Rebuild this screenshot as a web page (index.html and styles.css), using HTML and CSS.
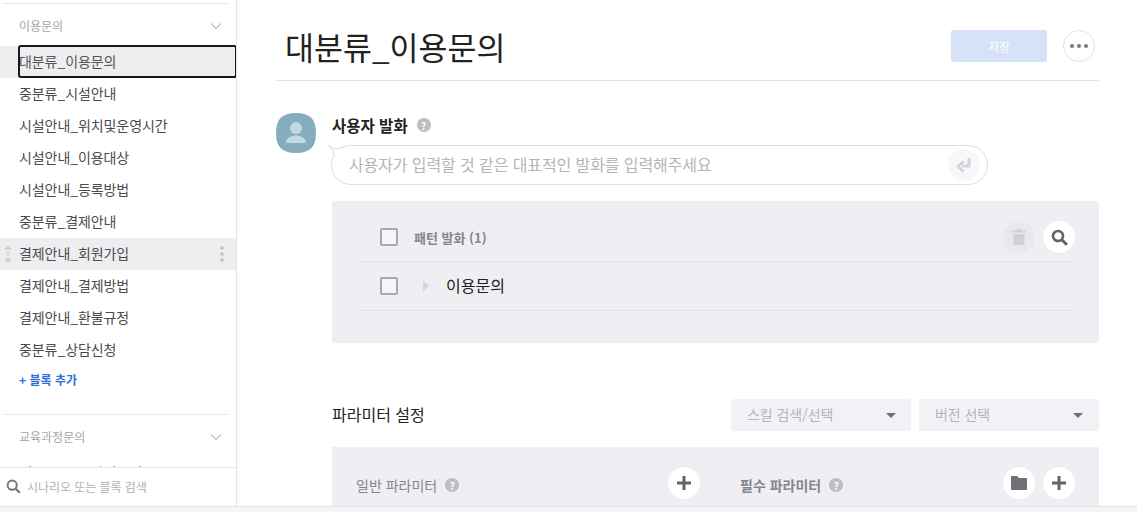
FILE: index.html
```html
<!DOCTYPE html>
<html lang="ko">
<head>
    <meta charset="UTF-8">
    <title>대분류_이용문의</title>
    <link rel="stylesheet" href="styles.css">
</head>
<body>
    <div class="app">
        <aside class="sidebar">
            <div class="block-list">
                <div class="group-header">
                    <span>이용문의</span>
                    <svg class="chevron" width="12" height="8" viewBox="0 0 12 8"><path d="M1 1.5l5 5 5-5" fill="none" stroke="#c4c4c8" stroke-width="1.4"/></svg>
                </div>
                <div class="block-item selected"><span class="focus-ring">대분류_이용문의</span></div>
                <div class="block-item">중분류_시설안내</div>
                <div class="block-item">시설안내_위치및운영시간</div>
                <div class="block-item">시설안내_이용대상</div>
                <div class="block-item">시설안내_등록방법</div>
                <div class="block-item">중분류_결제안내</div>
                <div class="block-item hovered">
                    <svg class="drag-handle" width="10" height="18" viewBox="0 0 10 18">
                        <path d="M5 .5l4 4H1z" fill="#cdcdd1"/>
                        <circle cx="5" cy="7.500" r="1" fill="#cdcdd1"/>
                        <circle cx="5" cy="10.500" r="1" fill="#cdcdd1"/>
                        <path d="M5 17.500l4-4H1z" fill="#cdcdd1"/>
                    </svg>
                    <span>결제안내_회원가입</span>
                    <svg class="item-more" width="4" height="16" viewBox="0 0 4 16">
                        <circle cx="2" cy="2" r="1.7" fill="#bdbdc2"/>
                        <circle cx="2" cy="8" r="1.7" fill="#bdbdc2"/>
                        <circle cx="2" cy="14" r="1.7" fill="#bdbdc2"/>
                    </svg>
                </div>
                <div class="block-item">결제안내_결제방법</div>
                <div class="block-item">결제안내_환불규정</div>
                <div class="block-item">중분류_상담신청</div>
                <div class="add-block">+ 블록 추가</div>
                <div class="group-header second">
                    <span>교육과정문의</span>
                    <svg class="chevron" width="12" height="8" viewBox="0 0 12 8"><path d="M1 1.5l5 5 5-5" fill="none" stroke="#c4c4c8" stroke-width="1.4"/></svg>
                </div>
                <div class="block-item">대분류_교육과정문의</div>
            </div>
            <div class="sidebar-search">
                <svg width="15" height="15" viewBox="0 0 15 15"><circle cx="6.2" cy="6.2" r="4.6" fill="none" stroke="#77777f" stroke-width="2"/><path d="M9.6 9.6l4.2 4.2" stroke="#77777f" stroke-width="2.2"/></svg>
                <span>시나리오 또는 블록 검색</span>
            </div>
        </aside>

        <main class="content">
            <header class="page-header">
                <h1>대분류_이용문의</h1>
                <button class="save-button">저장</button>
                <button class="more-button">
                    <svg width="18" height="4" viewBox="0 0 18 4"><circle cx="2" cy="2" r="2" fill="#77777f"/><circle cx="9" cy="2" r="2" fill="#77777f"/><circle cx="16" cy="2" r="2" fill="#77777f"/></svg>
                </button>
            </header>

            <section class="utterance">
                <div class="avatar">
                    <svg width="40" height="40" viewBox="0 0 40 40">
                        <path d="M20 0C34 0 40 6 40 20S34 40 20 40 0 34 0 20 6 0 20 0z" fill="#86adbd"/>
                        <circle cx="20" cy="15" r="6" fill="#c3d8df"/>
                        <path d="M10 30c0-5 5-7.500 10-7.500S30 25 30 30z" fill="#c3d8df"/>
                    </svg>
                </div>
                <div class="utterance-body">
                    <div class="field-label">사용자 발화 <span class="help">?</span></div>
                    <div class="utterance-input">
                        <svg class="bubble-tail" width="16" height="12" viewBox="0 0 16 12"><path d="M1 1L9 1 14 5 7 10z" fill="#fff"/><path d="M.5 .5C2.500 1.500 3.500 3 4.500 4.500 5 7 5.500 9 6 11M.5 .5C3 3.500 7 5.500 15 1.500" fill="none" stroke="#dedee2"/></svg>
                        <span>사용자가 입력할 것 같은 대표적인 발화를 입력해주세요</span>
                        <span class="enter-button">
                            <svg width="18" height="17" viewBox="0 0 18 17"><path d="M14 1v8H7M8.500 4.500L3 9.500l5.500 5" fill="none" stroke="#d4d4d9" stroke-width="3"/></svg>
                        </span>
                    </div>
                </div>
            </section>

            <section class="pattern-panel">
                <div class="pattern-row head">
                    <span class="checkbox"></span>
                    <span class="pattern-title">패턴 발화 (1)</span>
                    <span class="round-button faded">
                        <svg width="14" height="16" viewBox="0 0 14 16"><path d="M5 0h4v1.500h5V3.500H0V1.500h5zM1.500 5h11v11h-11z" fill="#d0d0d6"/></svg>
                    </span>
                    <span class="round-button">
                        <svg width="17" height="17" viewBox="0 0 17 17"><circle cx="7" cy="7" r="5" fill="none" stroke="#63636d" stroke-width="2.600"/><path d="M10.800 10.800l5 5" stroke="#63636d" stroke-width="3"/></svg>
                    </span>
                </div>
                <div class="pattern-row">
                    <span class="checkbox"></span>
                    <svg class="row-arrow" width="6" height="10" viewBox="0 0 6 10"><path d="M0 0l6 5-6 5z" fill="#d4d4d9"/></svg>
                    <span class="pattern-text">이용문의</span>
                </div>
            </section>

            <section class="param-header">
                <h2>파라미터 설정</h2>
                <div class="select-box"><span>스킬 검색/선택</span><i class="caret"></i></div>
                <div class="select-box version"><span>버전 선택</span><i class="caret"></i></div>
            </section>

            <section class="param-panel">
                <div class="param-col">
                    <span class="param-title">일반 파라미터</span>
                    <span class="help">?</span>
                    <span class="round-button push">
                        <svg width="16" height="16" viewBox="0 0 16 16"><path d="M8 1v14M1 8h14" stroke="#63636d" stroke-width="3"/></svg>
                    </span>
                </div>
                <div class="param-col required">
                    <span class="param-title">필수 파라미터</span>
                    <span class="help">?</span>
                    <span class="round-button push">
                        <svg width="16" height="14" viewBox="0 0 16 14"><path d="M0 1a1 1 0 0 1 1-1h5l2 2h7a1 1 0 0 1 1 1v10a1 1 0 0 1-1 1H1a1 1 0 0 1-1-1z" fill="#6f6f78"/></svg>
                    </span>
                    <span class="round-button">
                        <svg width="16" height="16" viewBox="0 0 16 16"><path d="M8 1v14M1 8h14" stroke="#63636d" stroke-width="3"/></svg>
                    </span>
                </div>
            </section>
        </main>
    </div>
    <div class="bottom-bar"></div>
</body>
</html>
```

FILE: styles.css
```css
* {
    margin: 0;
    padding: 0;
    box-sizing: border-box;
}

html, body {
    height: 100%;
    overflow: hidden;
}

body {
    font-family: "Noto Sans CJK KR", "Noto Sans", sans-serif;
    background: white;
    color: #333;
    display: flex;
    flex-direction: column;
}

.app {
    flex: 1;
    min-height: 0;
    display: flex;
}

.bottom-bar {
    height: 6px;
    background: #f5f5f8;
    border-top: 1px solid #e4e4e8;
}

/* sidebar */
.sidebar {
    width: 237px;
    border-right: 1px solid #e4e4e8;
    display: flex;
    flex-direction: column;
}

.block-list {
    flex: 1;
    min-height: 0;
    overflow: hidden;
    padding-top: 3px;
}

.group-header {
    height: 43px;
    margin: 0 8px 0 3px;
    padding: 1px 6px 0 16px;
    border-top: 1px solid #e8e8ec;
    display: flex;
    align-items: center;
    justify-content: space-between;
    font-size: 12px;
    color: #a5a5ab;
}

.group-header.second {
    margin-top: 20px;
}

.block-item {
    height: 32px;
    padding: 0 0 2px 19px;
    display: flex;
    align-items: center;
    font-size: 14px;
    letter-spacing: -0.08px;
    color: #4a4a50;
    position: relative;
}

.block-item.selected,
.block-item.hovered {
    background: #eeeef1;
}

.block-item.selected {
    color: #555;
}

.focus-ring {
    position: absolute;
    left: 18px;
    top: -1px;
    right: 0;
    bottom: 0;
    padding-bottom: 1px;
    display: flex;
    align-items: center;
    text-indent: -1px;
    border: 2px solid #18181c;
    border-radius: 3px;
    background: #eeeef1;
    margin-right: -1px;
}

.drag-handle {
    position: absolute;
    left: 3px;
    top: 7px;
}

.item-more {
    position: absolute;
    right: 12px;
    top: 8px;
}

.add-block {
    height: 28px;
    padding: 0 0 2px 19px;
    display: flex;
    align-items: center;
    font-size: 12px;
    font-weight: 700;
    color: #2f6fdc;
}

.sidebar-search {
    height: 39px;
    padding: 0 0 2px 6px;
    border-top: 1px solid #e8e8ec;
    display: flex;
    align-items: center;
    gap: 6px;
    font-size: 12px;
    letter-spacing: -0.05px;
    color: #b0b0b6;
    background: white;
}

/* main area */
.content {
    flex: 1;
    min-width: 0;
    padding: 0 38px 0 39px;
    overflow: hidden;
}

.page-header {
    height: 81px;
    padding: 12px 4px 0 9px;
    border-bottom: 1px solid #e4e4e8;
    display: flex;
    align-items: center;
}

.page-header h1 {
    flex: 1;
    font-size: 31.500px;
    font-weight: 400;
    color: #222;
}

.save-button {
    width: 96px;
    height: 32px;
    border: none;
    border-radius: 2px;
    background: #d6e2f8;
    color: white;
    font-family: inherit;
    font-size: 12px;
}

.more-button {
    width: 32px;
    height: 32px;
    margin-left: 16px;
    border: 1px solid #e4e4e8;
    border-radius: 50%;
    background: white;
    display: flex;
    align-items: center;
    justify-content: center;
}

.utterance {
    margin-top: 32px;
    display: flex;
    gap: 15px;
}

.avatar {
    width: 40px;
    height: 40px;
}

.utterance-body {
    flex: 1;
}

.field-label {
    height: 24px;
    margin-left: 1px;
    display: flex;
    align-items: center;
    gap: 9px;
    font-size: 15.500px;
    font-weight: 700;
    color: #222;
}

.help {
    width: 14px;
    height: 14px;
    border-radius: 50%;
    background: #bdbdc2;
    color: white;
    font-size: 10px;
    font-weight: 700;
    display: inline-flex;
    align-items: center;
    justify-content: center;
}

.utterance-input {
    position: relative;
    width: 657px;
    height: 40px;
    margin-top: 8px;
    padding: 0 7px 2px 17px;
    border: 1px solid #dedee2;
    border-radius: 20px;
    display: flex;
    align-items: center;
    justify-content: space-between;
    font-size: 16px;
    letter-spacing: -0.1px;
    color: #b4b4ba;
}

.bubble-tail {
    position: absolute;
    left: -4px;
    top: -1px;
}

.enter-button {
    width: 32px;
    height: 32px;
    margin-bottom: -2px;
    border-radius: 50%;
    background: #f8f8fa;
    display: flex;
    align-items: center;
    justify-content: center;
}

.pattern-panel {
    height: 142px;
    margin: 16px 0 0 56px;
    padding: 12px 24px 0;
    background: #eeeef3;
    border-radius: 3px;
}

.pattern-row {
    height: 49px;
    padding-left: 24px;
    border-bottom: 1px solid #e2e2e7;
    display: flex;
    align-items: center;
}

.checkbox {
    width: 18px;
    height: 18px;
    background: #f5f5f8;
    border: 2px solid #a8a8ae;
    border-radius: 2px;
}

.pattern-title {
    flex: 1;
    margin-left: 16px;
    font-size: 13px;
    font-weight: 700;
    color: #85858c;
}

.round-button {
    width: 32px;
    height: 32px;
    margin-left: 8px;
    border-radius: 50%;
    background: white;
    display: flex;
    align-items: center;
    justify-content: center;
    flex-shrink: 0;
}

.round-button.faded {
    background: #e8e8ed;
}

.round-button.push {
    margin-left: auto;
}

.row-arrow {
    margin-left: 25px;
}

.pattern-text {
    margin: 0 0 2px 17px;
    font-size: 16px;
    color: #222;
}

.param-header {
    height: 32px;
    margin: 56px 0 0 56px;
    display: flex;
    align-items: center;
}

.param-header h2 {
    flex: 1;
    margin-bottom: 2px;
    font-size: 16px;
    font-weight: 400;
    color: #222;
}

.select-box {
    width: 180px;
    height: 32px;
    padding: 0 15px 2px 16px;
    background: #f2f2f6;
    border-radius: 2px;
    display: flex;
    align-items: center;
    justify-content: space-between;
    font-size: 14px;
    letter-spacing: -0.05px;
    color: #b4b4ba;
}

.select-box.version {
    margin-left: 8px;
    padding-right: 16px;
}

.caret {
    width: 0;
    height: 0;
    margin-bottom: -2px;
    border-left: 5.500px solid transparent;
    border-right: 5.500px solid transparent;
    border-top: 5px solid #6f6f78;
}

.param-panel {
    height: 59px;
    margin: 16px 0 0 56px;
    padding: 20px 24px 0;
    background: #eeeef3;
    display: flex;
    align-items: flex-start;
}

.param-col {
    width: 344px;
    height: 32px;
    display: flex;
    align-items: flex-start;
}

.param-col.required {
    width: 335px;
    margin-left: 40px;
}

.param-title {
    margin: 8px 8px 0 0;
    font-size: 14px;
    color: #85858c;
}

.param-col.required .param-title {
    font-weight: 700;
}

.param-col .help {
    margin-top: 11px;
}
```
